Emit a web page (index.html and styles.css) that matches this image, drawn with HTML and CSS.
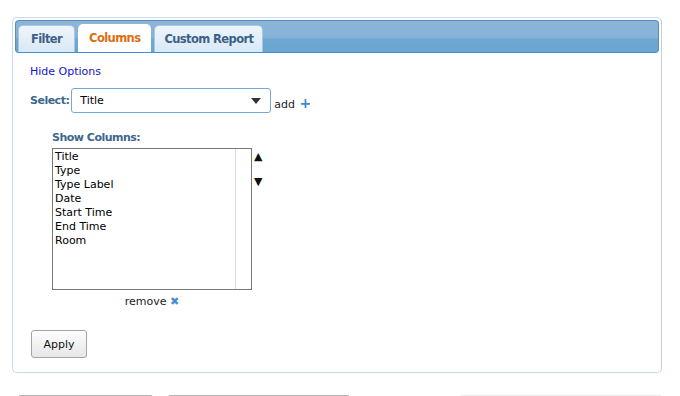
FILE: index.html
```html
<!DOCTYPE html>
<html lang="en">
<head>
    <meta charset="UTF-8">
    <title>Report Options</title>
    <link rel="stylesheet" href="styles.css">
</head>
<body>

<div class="panel">
    <div class="tabbar">
        <div class="tab">Filter</div>
        <div class="tab active">Columns</div>
        <div class="tab">Custom Report</div>
    </div>

    <div class="content">
        <a class="toggle" href="#">Hide Options</a>

        <div class="select-row">
            <span class="label">Select:</span>
            <div class="dropdown">
                <span>Title</span>
                <span class="caret"></span>
            </div>
            <span class="add">add <b>+</b></span>
        </div>

        <div class="columns">
            <div class="label">Show Columns:</div>
            <div class="list-row">
                <div class="listbox">
                    <ul>
                        <li>Title</li>
                        <li>Type</li>
                        <li>Type Label</li>
                        <li>Date</li>
                        <li>Start Time</li>
                        <li>End Time</li>
                        <li>Room</li>
                    </ul>
                    <div class="track"></div>
                </div>
                <div class="arrows">
                    <span>&#9650;</span>
                    <span>&#9660;</span>
                </div>
            </div>
            <div class="remove">remove <b>&#10006;</b></div>
        </div>

        <button class="apply">Apply</button>
    </div>
</div>

<div class="bottom">
    <div class="stub one"></div>
    <div class="stub two"></div>
    <div class="stub three"></div>
</div>

</body>
</html>
```

FILE: styles.css
```css
body {
    margin: 0;
    font-family: "DejaVu Sans", sans-serif;
    font-size: 11px;
    color: #111;
    background: #fff;
    overflow: hidden;
}
.panel {
    margin: 17px 0 0 12px;
    width: 644px;
    height: 350px;
    border: 1px solid #c4def0;
    border-right-color: #c9ccd0;
    border-radius: 5px;
    padding: 2px;
}
.tabbar {
    height: 27px;
    padding: 4px 0 0 2px;
    display: flex;
    gap: 3px;
    align-items: flex-end;
    border: 1px solid #5d8cb8;
    border-bottom-color: #3f90d6;
    border-radius: 4px;
    background: linear-gradient(to bottom, #8ab5d9 0, #87b3d8 52%, #6ea7d2 60%, #6aa5d1 100%);
}
.tab {
    height: 26px;
    line-height: 27px;
    padding: 0 11px;
    font-weight: bold;
    font-size: 11.5px;
    letter-spacing: -0.6px;
    color: #3c6088;
    border: 1px solid #a9c7e0;
    border-bottom: none;
    border-radius: 5px 5px 0 0;
    background: linear-gradient(to bottom, #eef5fb, #d9e9f6);
}
.tab:first-child {
    padding: 0 12px;
}
.tab:last-child {
    padding: 0 9px;
}
.tab.active {
    color: #dc6e12;
    background: #fff;
    border-color: #fff;
    height: 27px;
    padding: 0 10px;
}
.content {
    padding: 12px 0 0 15px;
}
.toggle {
    display: block;
    font-size: 11px;
    color: #1313c8;
    text-decoration: none;
}
.select-row {
    display: flex;
    align-items: center;
    margin-top: 10px;
}
.label {
    font-weight: bold;
    letter-spacing: -0.5px;
    color: #3d6690;
}
.dropdown {
    margin-left: 2px;
    width: 190px;
    height: 23px;
    padding: 0 0 0 8px;
    display: flex;
    align-items: center;
    justify-content: space-between;
    border: 1px solid #76a6da;
    border-radius: 3px;
    color: #000;
}
.caret {
    width: 0;
    height: 0;
    margin-right: 9px;
    border-left: 5px solid transparent;
    border-right: 5px solid transparent;
    border-top: 6px solid #333;
}
.add {
    margin: 4px 0 0 3px;
    color: #222;
}
.add b {
    color: #3a8bd0;
    font-size: 14px;
    margin-left: 1px;
}
.columns {
    margin: 18px 0 0 22px;
    width: 214px;
}
.list-row {
    display: flex;
    margin-top: 4px;
}
.listbox {
    width: 198px;
    height: 140px;
    display: flex;
    border: 1px solid #777;
}
.listbox ul {
    flex: 1;
    margin: 0;
    padding: 1px 0 0 2px;
    list-style: none;
    color: #000;
}
.listbox li {
    height: 14px;
    line-height: 14px;
}
.track {
    width: 15px;
    border-left: 1px solid #dcdcdc;
}
.arrows {
    display: flex;
    flex-direction: column;
    margin-left: 2px;
    font-size: 11px;
    line-height: 12px;
    color: #111;
    gap: 13px;
    padding-top: 3px;
}
.remove {
    text-align: center;
    margin: 5px 0 0 0;
    width: 200px;
    color: #222;
}
.remove b {
    color: #4a8ed0;
    font-size: 11px;
}
.apply {
    margin: 22px 0 0 1px;
    width: 56px;
    height: 28px;
    font-family: "DejaVu Sans", sans-serif;
    font-size: 11px;
    color: #111;
    border: 1px solid #a4a4a4;
    border-radius: 3px;
    background: linear-gradient(to bottom, #fdfdfd, #e6e6e6);
}
.bottom {
    display: flex;
    margin-top: 22px;
    height: 10px;
}
.stub {
    height: 8px;
    border: 1px solid #b4b4b4;
    border-radius: 2px 2px 0 0;
}
.one {
    margin-left: 18px;
    width: 133px;
}
.two {
    margin-left: 15px;
    width: 180px;
}
.three {
    margin-left: 110px;
    width: 200px;
    border-color: #eee;
}
```
